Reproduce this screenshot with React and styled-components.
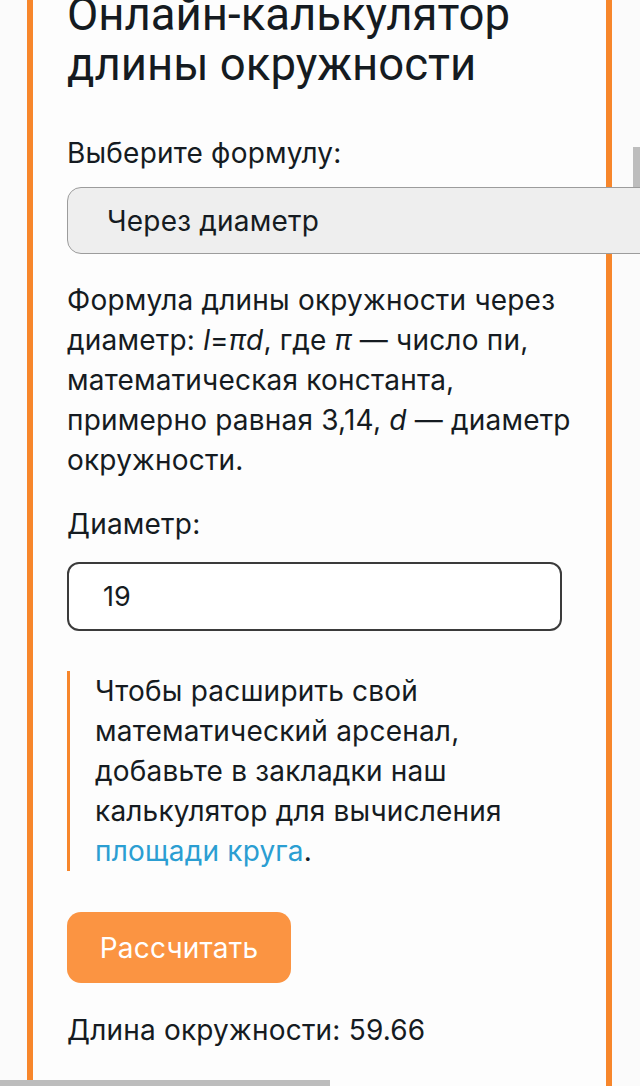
import React, { useState } from 'react';
import styled, { createGlobalStyle } from 'styled-components';

const GlobalStyle = createGlobalStyle`
  html, body {
    margin: 0;
    padding: 0;
    background: #fbfbfb;
    overflow: hidden;
  }
  body {
    font-family: Inter, "Noto Sans", sans-serif;
    color: #151b21;
  }
`;

const Page = styled.div`
  width: 640px;
  height: 1086px;
  overflow: hidden;
  position: relative;
`;

const Card = styled.section`
  margin-left: 27px;
  margin-top: -10px;
  min-height: 1120px;
  border-left: 6px solid #f7862b;
  border-right: 6px solid #f7862b;
  background: #fdfdfd;
  padding: 0 0 0 34px;
  box-sizing: content-box;
  width: 539px;
  display: flex;
  flex-direction: column;
  align-items: flex-start;
  letter-spacing: 0.2px;
`;

const Title = styled.h1`
  margin: 0;
  font-family: Roboto, "Noto Sans", sans-serif;
  font-size: 45.5px;
  line-height: 50px;
  font-weight: 400;
  letter-spacing: 0;
`;

const Label = styled.div`
  font-size: 28px;
  line-height: 36px;
  margin-top: ${(p) => p.$top}px;
`;

const Select = styled.div`
  position: relative;
  z-index: 1;
  margin-top: 16px;
  width: 600px;
  height: 67px;
  box-sizing: border-box;
  background: #eeeeee;
  border: 1.5px solid #9c9c9c;
  border-radius: 14px;
  display: flex;
  align-items: center;
  padding-left: 39px;
  font-size: 28px;
`;

const Paragraph = styled.p`
  margin: 26px 0 0;
  width: 505px;
  font-size: 28px;
  line-height: 40px;
`;

const Input = styled.input`
  margin-top: 20px;
  width: 495px;
  height: 69px;
  box-sizing: border-box;
  border: 2px solid #3b3b3b;
  border-radius: 12px;
  background: #fff;
  padding: 0 0 0 34px;
  font-family: Inter, "Noto Sans", sans-serif;
  font-size: 27px;
  color: #151b21;
  outline: none;
`;

const Note = styled.blockquote`
  margin: 40px 0 0;
  border-left: 3px solid #f7862b;
  padding-left: 25px;
  width: 477px;
  font-size: 28px;
  line-height: 40px;
`;

const Link = styled.a`
  color: #2b9ed2;
  text-decoration: none;
`;

const Button = styled.button`
  margin-top: 41px;
  width: 224px;
  height: 71px;
  border: none;
  border-radius: 14px;
  background: #fb9442;
  color: #fff;
  font-family: Inter, "Noto Sans", sans-serif;
  font-size: 28px;
  letter-spacing: 0.2px;
  cursor: pointer;
`;

const Scrollbar = styled.div`
  position: absolute;
  background: #bdbdbd;
  ${(p) => (p.$vertical
    ? 'right: 0; top: 147px; width: 7px; height: 88px;'
    : 'left: 0; bottom: 0; width: 330px; height: 6px;')}
`;

export default function App() {
  const [diameter, setDiameter] = useState('19');
  const [result, setResult] = useState('59.66');

  const calc = () => {
    const d = parseFloat(diameter.replace(',', '.'));
    if (!Number.isNaN(d)) setResult((Math.PI * d).toFixed(2));
  };

  return (
    <Page>
      <GlobalStyle />
      <Card>
        <Title>Онлайн-калькулятор длины окружности</Title>
        <Label $top={45}>Выберите формулу:</Label>
        <Select>Через диаметр</Select>
        <Paragraph>
          Формула длины окружности через диаметр: <i>l</i>=<i>πd</i>, где <i>π</i> — число пи,
          математическая константа, примерно равная 3,14, <i>d</i> — диаметр окружности.
        </Paragraph>
        <Label $top={26}>Диаметр:</Label>
        <Input value={diameter} onChange={(e) => setDiameter(e.target.value)} />
        <Note>
          Чтобы расширить свой математический арсенал, добавьте в закладки наш калькулятор для
          вычисления <Link href="#">площади круга</Link>.
        </Note>
        <Button onClick={calc}>Рассчитать</Button>
        <Label $top={29}>Длина окружности: {result}</Label>
      </Card>
      <Scrollbar $vertical />
      <Scrollbar />
    </Page>
  );
}
